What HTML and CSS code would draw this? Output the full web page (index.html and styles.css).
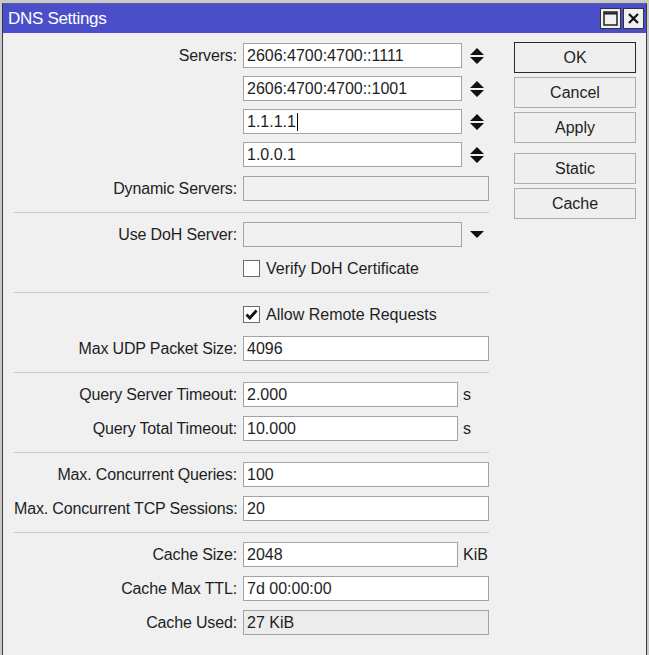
FILE: index.html
```html
<!DOCTYPE html>
<html>
<head>
<meta charset="utf-8">
<link rel="stylesheet" href="styles.css">
</head>
<body>
<div class="window">
  <div class="titlebar">
    <span class="title">DNS Settings</span>
    <div class="tbtns">
      <span class="tbtn"><svg width="15" height="15" viewBox="0 0 15 15"><rect x="1" y="1" width="13" height="13" fill="none" stroke="#222" stroke-width="1.5"/><line x1="1" y1="2.5" x2="14" y2="2.5" stroke="#222" stroke-width="2"/></svg></span>
      <span class="tbtn"><svg width="13" height="13" viewBox="0 0 13 13"><path d="M2 2L11 11M11 2L2 11" stroke="#111" stroke-width="2.2"/></svg></span>
    </div>
  </div>
  <div class="content">
    <div class="form">
      <div class="row srv">
        <label>Servers:</label>
        <div class="field"><div class="input w-srv">2606:4700:4700::1111</div><svg class="spin" width="16" height="18" viewBox="0 0 16 18"><path d="M1 8L8 1L15 8Z M1 10L8 17L15 10Z" fill="#111"/></svg></div>
      </div>
      <div class="row srv">
        <label></label>
        <div class="field"><div class="input w-srv">2606:4700:4700::1001</div><svg class="spin" width="16" height="18" viewBox="0 0 16 18"><path d="M1 8L8 1L15 8Z M1 10L8 17L15 10Z" fill="#111"/></svg></div>
      </div>
      <div class="row srv">
        <label></label>
        <div class="field"><div class="input w-srv">1.1.1.1<span class="caret"></span></div><svg class="spin" width="16" height="18" viewBox="0 0 16 18"><path d="M1 8L8 1L15 8Z M1 10L8 17L15 10Z" fill="#111"/></svg></div>
      </div>
      <div class="row">
        <label></label>
        <div class="field"><div class="input w-srv">1.0.0.1</div><svg class="spin" width="16" height="18" viewBox="0 0 16 18"><path d="M1 8L8 1L15 8Z M1 10L8 17L15 10Z" fill="#111"/></svg></div>
      </div>
      <div class="row">
        <label>Dynamic Servers:</label>
        <div class="field"><div class="input w-full disabled"></div></div>
      </div>
      <div class="sep"></div>
      <div class="row">
        <label>Use DoH Server:</label>
        <div class="field"><div class="input w-srv disabled"></div><svg class="drop" width="14" height="8" viewBox="0 0 14 8"><path d="M0 0L14 0L7 7Z" fill="#111"/></svg></div>
      </div>
      <div class="row">
        <label></label>
        <div class="field check"><span class="box"></span><span>Verify DoH Certificate</span></div>
      </div>
      <div class="sep"></div>
      <div class="row">
        <label></label>
        <div class="field check"><span class="box"><svg width="13" height="11" viewBox="0 0 13 11"><path d="M1.5 5.5L4.8 9L11.5 1.5" fill="none" stroke="#111" stroke-width="2.8"/></svg></span><span>Allow Remote Requests</span></div>
      </div>
      <div class="row">
        <label>Max UDP Packet Size:</label>
        <div class="field"><div class="input w-full">4096</div></div>
      </div>
      <div class="sep"></div>
      <div class="row">
        <label>Query Server Timeout:</label>
        <div class="field"><div class="input w-unit">2.000</div><span class="unit">s</span></div>
      </div>
      <div class="row">
        <label>Query Total Timeout:</label>
        <div class="field"><div class="input w-unit">10.000</div><span class="unit">s</span></div>
      </div>
      <div class="sep"></div>
      <div class="row">
        <label>Max. Concurrent Queries:</label>
        <div class="field"><div class="input w-full">100</div></div>
      </div>
      <div class="row">
        <label>Max. Concurrent TCP Sessions:</label>
        <div class="field"><div class="input w-full">20</div></div>
      </div>
      <div class="sep"></div>
      <div class="row">
        <label>Cache Size:</label>
        <div class="field"><div class="input w-unit">2048</div><span class="unit">KiB</span></div>
      </div>
      <div class="row">
        <label>Cache Max TTL:</label>
        <div class="field"><div class="input w-full">7d 00:00:00</div></div>
      </div>
      <div class="row">
        <label>Cache Used:</label>
        <div class="field"><div class="input w-full ro">27 KiB</div></div>
      </div>
    </div>
    <div class="buttons">
      <button class="btn default">OK</button>
      <button class="btn">Cancel</button>
      <button class="btn">Apply</button>
      <button class="btn gap">Static</button>
      <button class="btn">Cache</button>
    </div>
  </div>
</div>
</body>
</html>
```
FILE: styles.css
```css
html, body {
  margin: 0;
  padding: 0;
}
body {
  background: #c9c9c9;
  width: 649px;
  height: 655px;
  overflow: hidden;
  font-family: "Liberation Sans", Arial, sans-serif;
  font-size: 16px;
  color: #1e1e1e;
}
.window {
  margin: 3px 0 0 2px;
  width: 645px;
  height: 652px;
  box-sizing: border-box;
  border-left: 1px solid #3a3a3a;
  border-right: 1px solid #3a3a3a;
  border-top: 1px solid #5a5a9a;
  background: #f0f0f0;
}
.titlebar {
  height: 29px;
  background: #4a4fc9;
  display: flex;
  align-items: center;
  justify-content: space-between;
  padding: 0 2px 0 5px;
}
.title {
  color: #fff;
  font-size: 17px;
  letter-spacing: -0.3px;
}
.tbtns {
  display: flex;
  gap: 2px;
}
.tbtn {
  width: 19px;
  height: 19px;
  background: #f0f0f0;
  border: 1px solid #333;
  display: flex;
  align-items: center;
  justify-content: center;
}
.content {
  display: flex;
  padding-top: 9px;
}
.form {
  margin-left: 11px;
  margin-top: 1px;
  width: 475px;
  display: flex;
  flex-direction: column;
  gap: 9px;
}
.row {
  display: grid;
  grid-template-columns: 223px 246px;
  column-gap: 6px;
  align-items: center;
  height: 25px;
}
.row.srv {
  margin-bottom: -1px;
}
.row label {
  text-align: right;
  white-space: nowrap;
  letter-spacing: -0.15px;
}
.field {
  display: flex;
  align-items: center;
}
.input {
  box-sizing: border-box;
  height: 25px;
  border: 1px solid #a3a3a3;
  background: #fff;
  padding: 0 3px;
  display: flex;
  align-items: center;
  white-space: nowrap;
}
.w-srv { width: 219px; }
.w-full { width: 246px; }
.w-unit { width: 215px; }
.disabled { background: #f0f0f0; }
.ro { background: #ececec; }
.caret {
  display: inline-block;
  width: 1px;
  height: 18px;
  background: #000;
  margin-left: 1px;
}
.spin { margin-left: 7px; }
.drop { margin-left: 8px; margin-top: 1px; }
.unit { margin-left: 5px; }
.check { gap: 6px; }
.box {
  box-sizing: border-box;
  width: 17px;
  height: 17px;
  border: 1px solid #6b6b6b;
  background: #fff;
  display: flex;
  align-items: center;
  justify-content: center;
}
.sep {
  height: 1px;
  background: #c9c9c9;
  margin: 2px 0 0 0;
}
.buttons {
  margin-left: 25px;
  display: flex;
  flex-direction: column;
  gap: 4px;
}
.btn {
  width: 122px;
  height: 31px;
  box-sizing: border-box;
  border: 1px solid #adadad;
  background: #efefef;
  font-family: "Liberation Sans", Arial, sans-serif;
  font-size: 16px;
  color: #1e1e1e;
  padding: 0;
}
.btn.default { border-color: #2a2a2a; }
.btn.gap { margin-top: 6px; }
```
